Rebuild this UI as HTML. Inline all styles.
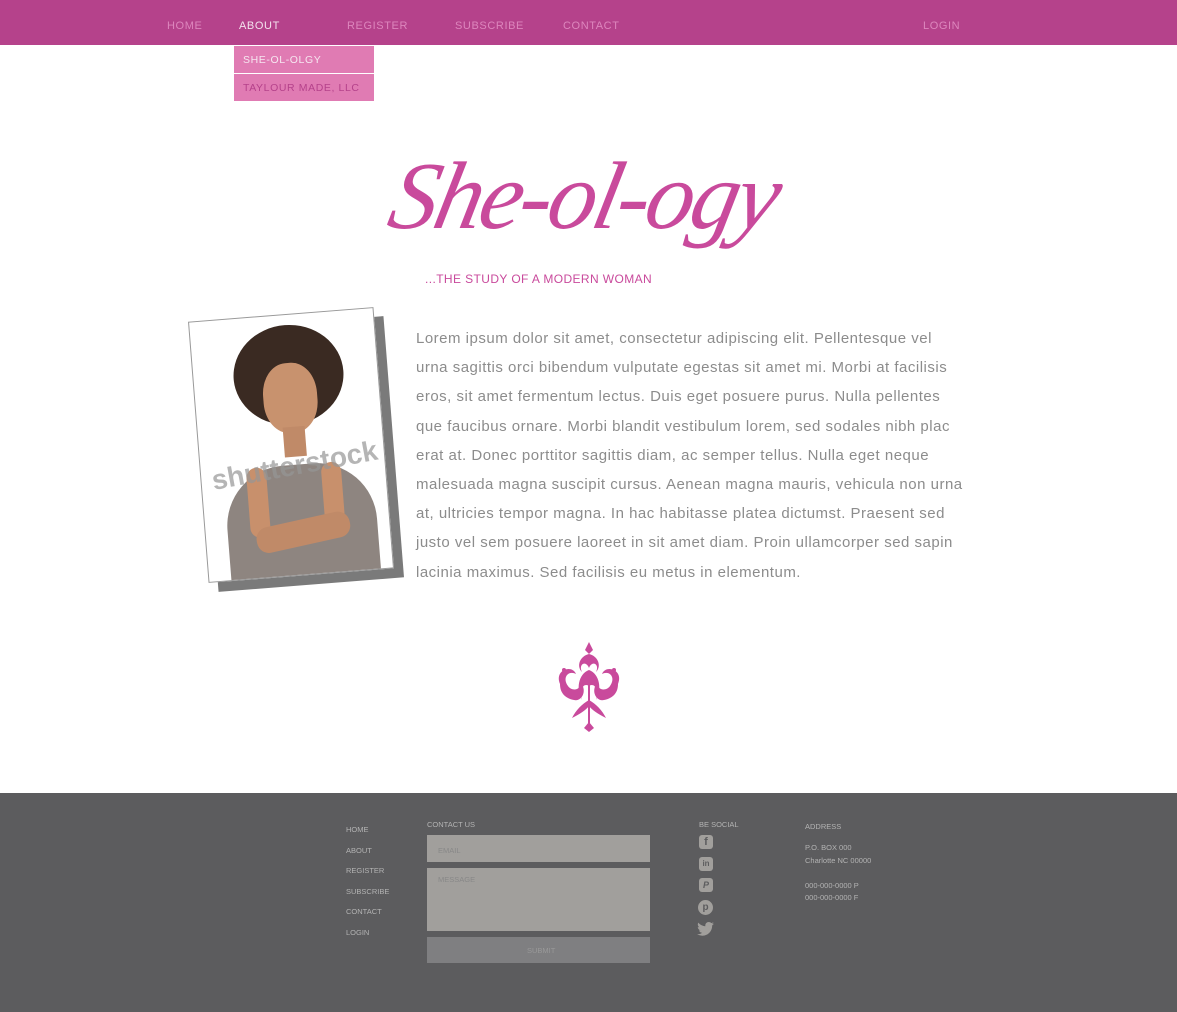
<!DOCTYPE html>
<html><head><meta charset="utf-8"><style>
*{margin:0;padding:0;box-sizing:border-box}
body{width:1177px;height:1012px;background:#fff;position:relative;overflow:hidden;font-family:"Liberation Sans",sans-serif}
.nav{position:absolute;left:0;top:0;width:1177px;height:45px;background:#b5428b}
.nav span{position:absolute;top:20px;font-size:11px;letter-spacing:.6px;color:#dd86bd}
.dd{position:absolute;left:234px;width:140px;height:27px;background:#e07bb3;font-size:10.5px;letter-spacing:.6px;padding:8px 0 0 9px}
.p{position:absolute;left:416px;top:324px;font-size:15px;line-height:29.2px;color:#8c8c8c;letter-spacing:.5px;white-space:nowrap}
.foot{position:absolute;left:0;top:793px;width:1177px;height:219px;background:#5c5c5e}
.f{position:absolute;font-size:7.5px;color:#b3b3b3}
.box{position:absolute;left:427px;width:223px;background:#a19f9c}
</style></head><body>
<div class="nav">
<span style="left:167px">HOME</span>
<span style="left:239px;color:#f4e2ee">ABOUT</span>
<span style="left:347px">REGISTER</span>
<span style="left:455px">SUBSCRIBE</span>
<span style="left:563px">CONTACT</span>
<span style="left:923px">LOGIN</span>
</div>
<div class="dd" style="top:46px;color:#f6e6f0">SHE-OL-OLGY</div>
<div class="dd" style="top:74px;color:#b5428b">TAYLOUR MADE, LLC</div>

<div style="position:absolute;left:392px;top:140px;font-family:'Liberation Serif',serif;font-style:italic;font-size:96px;color:#c94a9c;letter-spacing:-3px;transform:skewX(-12deg)">She-ol-ogy</div>
<div style="position:absolute;left:425px;top:272px;font-size:12px;letter-spacing:.4px;color:#c94a9c">...THE STUDY OF A MODERN WOMAN</div>

<div style="position:absolute;left:208px;top:323px;width:186px;height:262px;background:#7a7a7a;transform:rotate(-4.5deg)"></div>
<div style="position:absolute;left:198px;top:314px;width:186px;height:262px;background:#fff;border:1px solid #999;transform:rotate(-4.5deg);overflow:hidden">
<div style="position:absolute;left:22px;top:150px;width:150px;height:130px;background:#8e8580;border-radius:60px 60px 0 0"></div>
<div style="position:absolute;left:45px;top:150px;width:20px;height:70px;background:#c8906c;border-radius:10px"></div>
<div style="position:absolute;left:120px;top:150px;width:20px;height:70px;background:#c8906c;border-radius:10px"></div>
<div style="position:absolute;left:50px;top:205px;width:95px;height:26px;background:#c08a68;border-radius:12px;transform:rotate(-8deg)"></div>
<div style="position:absolute;left:40px;top:10px;width:110px;height:100px;background:#3a2a22;border-radius:50%"></div>
<div style="position:absolute;left:68px;top:48px;width:54px;height:70px;background:#c8926e;border-radius:45%"></div>
<div style="position:absolute;left:85px;top:112px;width:22px;height:30px;background:#c08a68"></div>
<div style="position:absolute;left:10px;top:135px;font-size:28px;color:rgba(150,150,150,.7);font-weight:bold;transform:rotate(-6deg)">shutterstock</div>
</div>

<div class="p">Lorem ipsum dolor sit amet, consectetur adipiscing elit. Pellentesque vel<br>urna sagittis orci bibendum vulputate egestas sit amet mi. Morbi at facilisis<br>eros, sit amet fermentum lectus. Duis eget posuere purus. Nulla pellentes<br>que faucibus ornare. Morbi blandit vestibulum lorem, sed sodales nibh plac<br>erat at. Donec porttitor sagittis diam, ac semper tellus. Nulla eget neque<br>malesuada magna suscipit cursus. Aenean magna mauris, vehicula non urna<br>at, ultricies tempor magna. In hac habitasse platea dictumst. Praesent sed<br>justo vel sem posuere laoreet in sit amet diam. Proin ullamcorper sed sapin<br>lacinia maximus. Sed facilisis eu metus in elementum.</div>

<svg style="position:absolute;left:552px;top:640px" width="74" height="92" viewBox="0 0 74 92" fill="#c94a9c">
<path d="M37 2 L41 10 L37 14 L33 10Z"/>
<path d="M37 14 C28 16 24 26 30 32 C26 24 34 20 37 28 C40 20 48 24 44 32 C50 26 46 16 37 14Z"/>
<path d="M8 44 C2 30 20 24 24 34 C16 30 10 38 16 46 C20 52 30 50 28 42 C36 50 30 62 22 60 C12 58 8 52 8 44Z"/>
<path d="M66 44 C72 30 54 24 50 34 C58 30 64 38 58 46 C54 52 44 50 46 42 C38 50 44 62 52 60 C62 58 66 52 66 44Z"/>
<path d="M37 30 C26 34 24 50 30 60 C26 50 32 42 37 46 C42 42 48 50 44 60 C50 50 48 34 37 30Z"/>
<path d="M36 44 H38 V86 H36Z"/>
<path d="M37 60 C30 64 24 70 20 78 C28 74 34 70 37 66 C40 70 46 74 54 78 C50 70 44 64 37 60Z"/>
<path d="M37 82 L42 88 L37 92 L32 88Z"/>
<circle cx="12" cy="30" r="2"/><circle cx="62" cy="30" r="2"/><circle cx="37" cy="38" r="3"/>
</svg>

<div class="foot">
<div class="f" style="left:346px;top:27px;line-height:20.5px">HOME<br>ABOUT<br>REGISTER<br>SUBSCRIBE<br>CONTACT<br>LOGIN</div>
<div class="f" style="left:427px;top:27px">CONTACT US</div>
<div class="box" style="top:42px;height:27px"><span class="f" style="left:11px;top:11px;color:#888">EMAIL</span></div>
<div class="box" style="top:75px;height:63px"><span class="f" style="left:11px;top:7px;color:#888">MESSAGE</span></div>
<div class="box" style="top:144px;height:26px;background:#7f7f81"><span class="f" style="left:100px;top:9px;color:#999">SUBMIT</span></div>
<div class="f" style="left:699px;top:27px">BE SOCIAL</div>
<div style="position:absolute;left:699px;top:42px;width:14px;height:14px;background:#a19f9c;border-radius:3px;color:#5c5c5e;font-size:11px;font-weight:bold;text-align:center;line-height:15px">f</div>
<div style="position:absolute;left:699px;top:64px;width:14px;height:14px;background:#a19f9c;border-radius:3px;color:#5c5c5e;font-size:8px;font-weight:bold;text-align:center;line-height:14px">in</div>
<div style="position:absolute;left:699px;top:85px;width:14px;height:14px;background:#a19f9c;border-radius:3px;color:#5c5c5e;font-size:9px;font-weight:bold;text-align:center;line-height:14px;font-style:italic">P</div>
<div style="position:absolute;left:698px;top:107px;width:15px;height:15px;background:#a19f9c;border-radius:50%;color:#5c5c5e;font-size:10px;font-weight:bold;text-align:center;line-height:15px">p</div>
<svg style="position:absolute;left:697px;top:129px" width="17" height="14" viewBox="0 0 24 20"><path fill="#a19f9c" d="M24 2.3c-.9.4-1.8.7-2.8.8 1-.6 1.8-1.6 2.2-2.7-1 .6-2 1-3.1 1.2C19.3.6 18 0 16.6 0c-2.7 0-4.9 2.2-4.9 4.9 0 .4 0 .8.1 1.1C7.7 5.8 4.1 3.9 1.7.9c-.4.7-.7 1.6-.7 2.5 0 1.7.9 3.2 2.2 4.1-.8 0-1.6-.2-2.2-.6v.1c0 2.4 1.7 4.4 3.9 4.8-.4.1-.8.2-1.3.2-.3 0-.6 0-.9-.1.6 2 2.4 3.4 4.6 3.4-1.7 1.3-3.8 2.1-6.1 2.1H0c2.2 1.4 4.8 2.2 7.5 2.2 9.1 0 14-7.5 14-14v-.6c1-.7 1.8-1.6 2.5-2.5z"/></svg>
<div class="f" style="left:805px;top:29px">ADDRESS</div>
<div class="f" style="left:805px;top:49px;line-height:12.5px">P.O. BOX 000<br>Charlotte NC 00000<br><br>000-000-0000 P<br>000-000-0000 F</div>
</div>
</body></html>
